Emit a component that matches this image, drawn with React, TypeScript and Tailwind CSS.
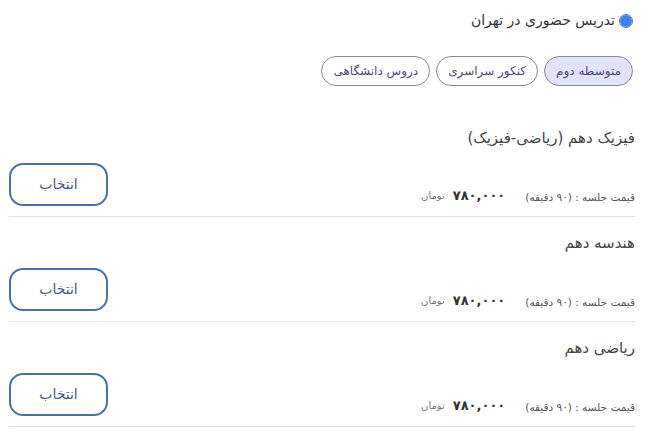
const FONT = { fontFamily: '"DejaVu Sans", "Noto Sans", sans-serif' };

type Course = { title: string };

const courses: Course[] = [
  { title: "فیزیک دهم (ریاضی-فیزیک)" },
  { title: "هندسه دهم" },
  { title: "ریاضی دهم" },
];

const tabs = [
  { label: "متوسطه دوم", active: true },
  { label: "کنکور سراسری", active: false },
  { label: "دروس دانشگاهی", active: false },
];

function CourseRow({ course }: { course: Course }) {
  return (
    <div className="border-b border-[#e2e2e2] pt-[14px] pb-[10px]">
      <h3 className="text-[15px] leading-6 text-[#444]">{course.title}</h3>
      <div className="mt-[13px] flex items-end justify-between">
        <div className="flex items-end gap-[20px]">
          <span className="text-[10.5px] text-[#555]">قیمت جلسه : (۹۰ دقیقه)</span>
          <div className="mb-[1px] flex items-center gap-[8px]">
            <span className="text-[13px] font-bold text-[#333]">۷۸۰,۰۰۰</span>
            <span className="text-[10px] text-[#777]">تومان</span>
          </div>
        </div>
        <button className="h-[43px] w-[99px] rounded-[14px] border-2 border-[#4a72a8] bg-white text-[14px] text-[#4a5a85]">
          انتخاب
        </button>
      </div>
    </div>
  );
}

export default function App() {
  return (
    <div dir="rtl" style={FONT} className="min-h-screen bg-white pl-[9px] pr-[31px] text-[#333]">
      <label className="flex items-center gap-[4px] pt-[10px] pr-[2px]">
        <span className="flex h-[14px] w-[14px] items-center justify-center rounded-full border border-[#777]">
          <span className="h-[12px] w-[12px] rounded-full bg-[#3b82f6]" />
        </span>
        <span className="text-[14px] text-[#333]">تدریس حضوری در تهران</span>
      </label>

      <div className="mt-[25px] flex gap-[6px] pr-[2px]">
        {tabs.map((t) => (
          <button
            key={t.label}
            className={
              "h-[30px] rounded-full border border-[#8a8a96] px-[11px] text-[12px] text-[#4a4a78] " +
              (t.active ? "bg-[#e2e2f9]" : "bg-white")
            }
          >
            {t.label}
          </button>
        ))}
      </div>

      <div className="mt-[26px]">
        {courses.map((c) => (
          <CourseRow key={c.title} course={c} />
        ))}
      </div>
    </div>
  );
}
